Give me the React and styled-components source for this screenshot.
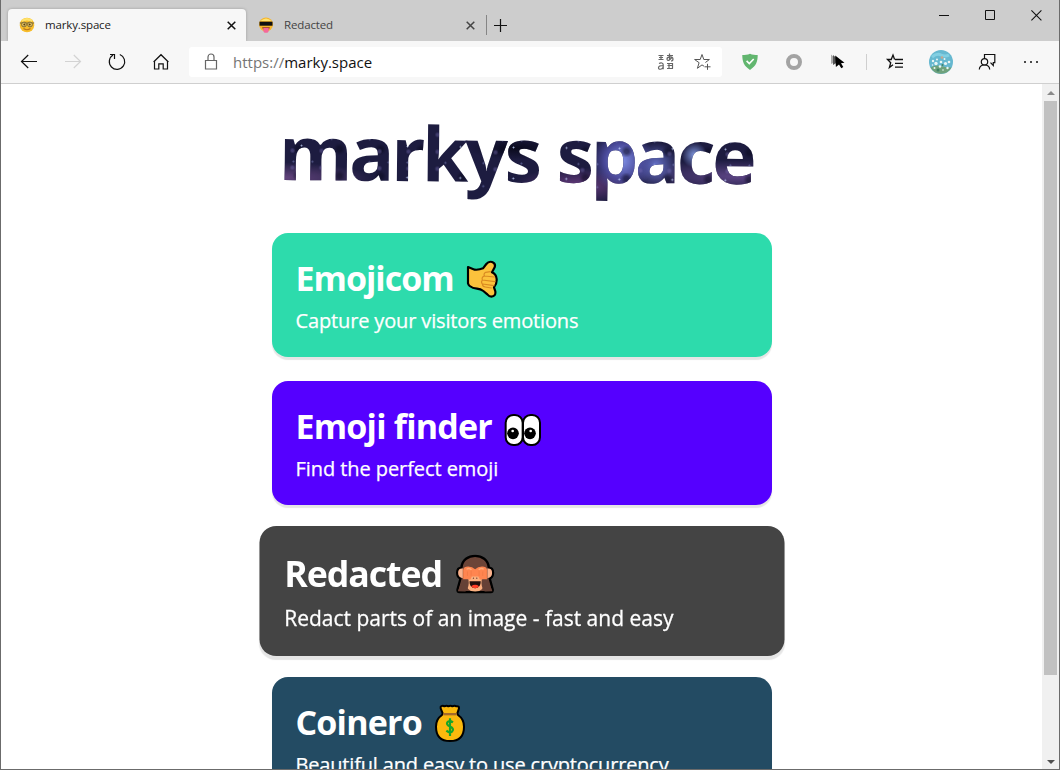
import React from "react";
import styled, { createGlobalStyle, css } from "styled-components";

const apps = [
  {
    name: "Emojicom",
    text: "Capture your visitors emotions",
    color: "#2ddbac",
    emoji: <CallMeHand />,
    spacing: "-1px",
    textSpacing: "-0.14px",
  },
  {
    name: "Emoji finder",
    text: "Find the perfect emoji",
    color: "#5500ff",
    emoji: <Eyes />,
    spacing: "-0.8px",
    textSpacing: "-0.07px",
  },
  {
    name: "Redacted",
    text: "Redact parts of an image - fast and easy",
    color: "#444444",
    emoji: <Monkey />,
    spacing: "-1px",
    textSpacing: "0px",
    hovered: true,
  },
  {
    name: "Coinero",
    text: "Beautiful and easy to use cryptocurrency",
    color: "#234b63",
    emoji: <MoneyBag />,
    spacing: "-0.8px",
    textSpacing: "-0.17px",
  },
];

const App = () => {
  return (
    <Window>
      <GlobalStyle />
      <TabStrip>
        <Tab $active>
          <NerdFace />
          <TabTitle>marky.space</TabTitle>
          <CloseIcon color="#111" />
        </Tab>
        <Tab>
          <CensoredFace />
          <TabTitle>Redacted</TabTitle>
          <CloseIcon color="#444" />
        </Tab>
        <NewTab>
          <Icon width="13" height="13" viewBox="0 0 13 13">
            <path d="M6.5 0v13M0 6.5h13" />
          </Icon>
        </NewTab>
        <WindowControls>
          <Icon width="11" height="11" viewBox="0 0 11 11" $weight={1}>
            <path d="M0 5.5h10" />
          </Icon>
          <Icon width="11" height="11" viewBox="0 0 11 11" $weight={1}>
            <path d="M.5 .5h9v9h-9z" />
          </Icon>
          <Icon width="11" height="11" viewBox="0 0 11 11" $weight={1.1}>
            <path d="M.4 .4l10 10M10.4 .4l-10 10" />
          </Icon>
        </WindowControls>
      </TabStrip>
      <Toolbar>
        <Slot>
          <Icon>
            <path d="M18 9.5H2.5M9.2 3l-6.700 6.500 6.700 6.500" />
          </Icon>
        </Slot>
        <Slot>
          <Icon $color="#d3d3d3">
            <path d="M2 9.5h15.500M10.800 3l6.700 6.500-6.700 6.500" />
          </Icon>
        </Slot>
        <Slot>
          <Icon>
            <path d="M12.8 2.5A7.7 7.7 0 1 1 6 3.1M3 2.5h4.5V7" />
          </Icon>
        </Slot>
        <Slot>
          <Icon>
            <path d="M3.5 9.2V17h4.3v-5.2h4.4V17h4.3V9.2M2.6 10L10 2.7l7.4 7.3" />
          </Icon>
        </Slot>
        <AddressBar>
          <Icon $color="#666">
            <path d="M4.5 8.5h11v8.5h-11zM7 8.5V5a3 3 0 0 1 6 0v3.5" />
          </Icon>
          <Url>
            <span>https://</span>marky.space
          </Url>
          <TranslateIcon />
          <Icon $color="#555" $weight={1}>
            <path d="M12 14.200L10 12.900l-4.600 3.400 1.700-5.600-4.500-3.200h5.600L10 2.500l1.800 5h5.600l-4 3M15.500 11.800v6M12.500 14.800h6" />
          </Icon>
        </AddressBar>
        <Extensions>
          <Icon $filled>
            <path
              fill="#62b66f"
              d="M10 1.800c2.600 1 5 1.300 7.700 1.300 0 6.500-1.500 11-7.700 14.800C3.800 14.100 2.300 9.600 2.300 3.100 5 3.100 7.400 2.800 10 1.800z"
            />
            <path fill="none" stroke="#fff" strokeWidth="1.6" d="M6.600 8.900l2.700 2.700 4.400-4.600" />
          </Icon>
          <Icon $filled>
            <circle cx="10" cy="10" r="6" fill="none" stroke="#a3a3a3" strokeWidth="4" />
          </Icon>
          <Icon $filled>
            <path fill="#aaa" d="M3 2.500l8 7-4 .5L3 12z" />
            <path fill="#555" d="M5 3l8 7-4 .5L5 13z" />
            <path fill="#000" d="M7.200 3.500l9.300 7.300-3.500.400 2.300 3.800-2 1.300-2.300-3.900-3.100 2.500z" />
          </Icon>
        </Extensions>
        <Divider />
        <BrowserActions>
          <Icon $weight={1.3}>
            <path d="M9.600 7.500L8 3 6.200 7.500H2.500l3.200 3.200-1.300 4.800L8 12.700M10 7.500h8M10 11.300h8M10 15.200h8" />
          </Icon>
          <Avatar />
          <Icon $weight={1.2}>
            <path d="M7.500 6.500v-4h10.300v8.200h-1.500v2.800l-2.800-2.800" />
            <circle cx="7.500" cy="9.800" r="3.200" />
            <path d="M2.300 17.500c.3-6 10.100-6 10.400 0" />
          </Icon>
          <Icon $filled>
            <circle cx="4" cy="10" r="1" />
            <circle cx="10" cy="10" r="1" />
            <circle cx="16" cy="10" r="1" />
          </Icon>
        </BrowserActions>
      </Toolbar>
      <Viewport>
        <Page>
          <Heading>markys space</Heading>
          {apps.map((app) => (
            <Card key={app.name} $color={app.color} $hovered={app.hovered}>
              <CardTitle $spacing={app.spacing}>
                <span>{app.name}</span>
                {app.emoji}
              </CardTitle>
              <CardText $spacing={app.textSpacing}>{app.text}</CardText>
            </Card>
          ))}
        </Page>
        <Scrollbar>
          <Arrow $color="#8a8a8a" $up />
          <Thumb />
          <Arrow $color="#505050" />
        </Scrollbar>
      </Viewport>
    </Window>
  );
};

export default App;

function CloseIcon({ color }) {
  return (
    <Icon width="9" height="9" viewBox="0 0 9 9" $weight={1.5} $color={color}>
      <path d="M.7 .7l7.600 7.600M8.300 .7L.7 8.300" />
    </Icon>
  );
}

function TranslateIcon() {
  return (
    <Icon $color="#666" $weight={1.2}>
      <path d="M2.500 3.500h5M3 5.500h4M2.500 7.500h5M5 3v5M11 3.500h6M13.500 1.500v7M16 4.500c-1 4-5 5-5 2.500s6-3 6 0c0 1.500-1 2-2 2M3 11.500c2-1 4.200-.7 4.200 1.300v4.500M7 13.500c-3 0-4.500.6-4.500 2.200 0 2.200 3.500 2 4.500-.2M11 11.500h5.500v5M11.500 13.500h5M11 16.500h6M13 11v5" />
    </Icon>
  );
}

function NerdFace() {
  return (
    <Favicon viewBox="0 0 16 16">
      <circle cx="8" cy="8" r="7.300" fill="#f7bd2c" />
      <path d="M3 4Q8 .5 13 4" fill="none" stroke="#ffe26b" strokeWidth="2.500" />
      <path d="M.8 6h14.400" stroke="#7d6a35" strokeWidth="1" />
      <circle cx="5" cy="7.500" r="2.400" fill="#e9c766" stroke="#7d6a35" strokeWidth="1" />
      <circle cx="11" cy="7.500" r="2.400" fill="#e9c766" stroke="#7d6a35" strokeWidth="1" />
      <circle cx="5.300" cy="7.500" r="1" fill="#584113" />
      <circle cx="10.700" cy="7.500" r="1" fill="#584113" />
      <path d="M4.500 11.500Q8 14 11.500 11.500" fill="none" stroke="#b8741c" strokeWidth="1.200" />
    </Favicon>
  );
}

function CensoredFace() {
  return (
    <Favicon viewBox="0 0 16 16">
      <circle cx="8" cy="7.500" r="7" fill="#f7b52c" />
      <path d="M2.500 4Q8-1 13.500 4z" fill="#ffe372" />
      <path d="M1.500 4.700h13v4h-13z" fill="#111" />
      <path d="M4 10.300h8q-1 3-4 3t-4-3z" fill="#963a28" />
      <path d="M5.300 11h5.400v2.200q0 2.600-2.700 2.600t-2.700-2.600z" fill="#f5699a" />
    </Favicon>
  );
}

function Avatar() {
  return (
    <svg width="24" height="24" viewBox="0 0 24 24">
      <circle cx="12" cy="12" r="12" fill="#66b8d0" />
      <path d="M1.500 17.500q5-3 10.500-1.500t10.500 1.500A12 12 0 0 1 1.500 17.500z" fill="#6fa27c" />
      <path d="M3 7q5-4 9-2t8 0" fill="none" stroke="#82cfe2" strokeWidth="3" />
      <g fill="#e8f6f5">
        <circle cx="4" cy="11" r="1.200" />
        <circle cx="8" cy="9.500" r="1" />
        <circle cx="7" cy="13.500" r="1.700" />
        <circle cx="12" cy="12" r="1.300" />
        <circle cx="15.500" cy="9" r="1" />
        <circle cx="16.500" cy="13.500" r="1.600" />
        <circle cx="20" cy="12" r="1.300" />
        <circle cx="11" cy="16.500" r="1.300" />
        <circle cx="5.500" cy="18" r="1" />
        <circle cx="18.500" cy="18" r="1.200" />
        <circle cx="14" cy="20" r=".8" />
        <circle cx="3.500" cy="15" r=".8" />
      </g>
      <circle cx="13" cy="7.500" r="1.300" fill="#c4a68f" />
      <circle cx="9" cy="20" r="1.500" fill="#3f8266" />
      <circle cx="13.500" cy="15" r="1" fill="#3f8266" />
    </svg>
  );
}

function CallMeHand() {
  return (
    <svg width="32" height="38" viewBox="621 105 96 114">
      <path
        d="M627 126l20 8q14 1 25-4l10-13q7-9 17-6 12 4 8 16l-8 15q13 6 14 20 1 15-8 25l4 12q2 15-12 16-6 0-12-7l-12-10q-8-6-19-7-13-1-22-8-4-3-5-8z"
        fill="#fcc23c"
        stroke="#000"
        strokeWidth="6.500"
        strokeLinejoin="round"
      />
      <path
        d="M694 140l-14 2q-8 5-3 11-10 2-7 12-5 6 0 12 1 9 9 9l18 3M677 153l29 3M670 165l38 5M671 177l34 5"
        fill="none"
        stroke="#d98a22"
        strokeWidth="3.500"
        strokeLinecap="round"
        strokeLinejoin="round"
      />
    </svg>
  );
}

function Eyes() {
  return (
    <LowEmoji width="38" height="34" viewBox="734 114 114 102">
      <g fill="#fff" stroke="#000" strokeWidth="6">
        <rect x="739" y="120" width="51" height="90" rx="23" />
        <rect x="791" y="120" width="51" height="90" rx="23" />
      </g>
      <circle cx="761" cy="175" r="17.500" />
      <circle cx="812" cy="175" r="17.500" />
      <circle cx="760" cy="168" r="4" fill="#fff" />
      <circle cx="814" cy="168" r="4" fill="#fff" />
    </LowEmoji>
  );
}

function Monkey() {
  return (
    <svg width="38.700" height="38" viewBox="617 104 122 120">
      <path
        d="M637 144C640 97 716 97 719 144q13 0 13 16 0 13-10 17l9 33q1 8-6 8h-94q-7 0-6-8l9-33q-10-4-10-17 0-16 13-16z"
        fill="#6c4437"
        stroke="#000"
        strokeWidth="7"
        strokeLinejoin="round"
      />
      <path d="M641 147q-14-1-14 13 0 15 14 16zM715 147q14-1 14 13 0 15-14 16z" fill="#fbb28c" />
      <path d="M653 188q5-21 25-21t25 21q4 28-25 28t-25-28z" fill="#fbb07f" />
      <path d="M642 151q2-10 15-10 13 0 21 8 8-8 21-8 13 0 15 10v29h-22l-4-9h-20l-4 9h-22z" fill="#ff8550" />
      <path
        d="M643 152v26M713 152v26M655 156v13M666 153v16M690 153v16M701 156v13"
        stroke="#e9733f"
        strokeWidth="1.500"
      />
      <path d="M652 149q9-5 15 2M689 151q6-7 15-2" fill="none" stroke="#ffab78" strokeWidth="4" />
      <path d="M640 180h18q4 22-9 36l-23-1zM716 180h-18q-4 22 9 36l23-1z" fill="#654136" />
      <circle cx="673" cy="176" r="2" fill="#60362a" />
      <circle cx="683" cy="176" r="2" fill="#60362a" />
      <path d="M661 185h34q0 21-17 21t-17-21z" fill="#210f0c" />
      <path d="M666 200q12-9 24 0-4 6-12 6t-12-6z" fill="#ff3e26" />
    </svg>
  );
}

function MoneyBag() {
  return (
    <svg width="32" height="39" viewBox="552 102 96 117">
      <path
        d="M573 109q6-3 10 0 7-3 12 0 7-3 12 0 7-3 12 0 9-1 8 6l-5 15 2 5q18 12 18 35 0 43-42 43t-42-43q0-23 18-35l2-5-6-15q-1-5 1-6z"
        fill="#fbb90d"
        stroke="#000"
        strokeWidth="6"
        strokeLinejoin="round"
      />
      <path d="M580 129h40v7h-40z" fill="#a56a2b" />
      <path
        d="M600 145v53M609 157q-8-6-15-2-6 5 0 11l11 6q7 6 1 13-7 5-17-3"
        fill="none"
        stroke="#16a529"
        strokeWidth="6.500"
      />
    </svg>
  );
}

function Icon({ width = 20, height = 20, viewBox = "0 0 20 20", ...rest }) {
  return <Svg width={width} height={height} viewBox={viewBox} {...rest} />;
}

const GlobalStyle = createGlobalStyle`
  body {
    margin: 0;
    overflow: hidden;
    font-family: "Open Sans", "Noto Sans", sans-serif;
  }
  * {
    box-sizing: border-box;
  }
`;

const Window = styled.div`
  display: flex;
  flex-direction: column;
  width: 1060px;
  height: 770px;
  overflow: hidden;
  border: 1px solid #6b6b6b;
  border-top: 0;
  background: #fff;
`;

const Svg = styled.svg`
  display: block;
  flex-shrink: 0;
  fill: ${(props) => (props.$filled ? "#111" : "none")};
  stroke: ${(props) => (props.$filled ? "none" : props.$color || "#111")};
  stroke-width: ${(props) => props.$weight || 1.2};
`;

const TabStrip = styled.div`
  display: flex;
  align-items: flex-end;
  height: 41px;
  padding-left: 7px;
  background: #cdcdcd;
  flex-shrink: 0;
`;

const Tab = styled.div`
  display: flex;
  align-items: center;
  width: ${(props) => (props.$active ? "238px" : "240px")};
  height: 32px;
  padding: ${(props) => (props.$active ? "0 10px 0 11px" : "0 11px 0 12px")};
  border-radius: 4px 4px 0 0;
  color: #444;
  ${(props) =>
    props.$active &&
    css`
      background: #f7f7f7;
      color: #222;
      box-shadow: 0 0 3px rgb(0 0 0 / 25%);
      clip-path: inset(-4px -4px 0 -4px);
    `}
`;

const Favicon = styled.svg`
  width: 16px;
  height: 16px;
  margin-right: 10px;
`;

const TabTitle = styled.span`
  flex: 1;
  font-size: 11.5px;
  line-height: 16px;
  letter-spacing: -0.15px;
`;

const NewTab = styled.div`
  display: flex;
  align-items: center;
  height: 20px;
  margin-bottom: 6px;
  padding-left: 7px;
  border-left: 1px solid #858585;
`;

const WindowControls = styled.div`
  display: flex;
  align-self: flex-start;
  gap: 35px;
  margin-left: auto;
  padding: 10px 17px 0 0;
`;

const Toolbar = styled.div`
  display: flex;
  align-items: center;
  height: 43px;
  padding-left: 6px;
  background: #f7f7f7;
  border-bottom: 1px solid #cfcfcf;
  flex-shrink: 0;
`;

const Slot = styled.div`
  display: flex;
  justify-content: center;
  width: 44px;
`;

const AddressBar = styled.div`
  display: flex;
  align-items: center;
  width: 533px;
  height: 30px;
  margin-left: 6px;
  padding: 0 10px 0 12px;
  background: #fff;
  border-radius: 3px;

  svg:last-child {
    margin-left: 16px;
  }
`;

const Url = styled.span`
  flex: 1;
  margin-left: 12px;
  font-size: 15px;
  line-height: 20px;
  color: #111;

  span {
    color: #757575;
  }
`;

const Extensions = styled.div`
  display: flex;
  gap: 24px;
  margin-left: 18px;
`;

const Divider = styled.div`
  width: 1px;
  height: 16px;
  margin: 0 18px;
  background: #cfcfcf;
`;

const BrowserActions = styled.div`
  display: flex;
  align-items: center;
  gap: 24px;
`;

const Viewport = styled.div`
  display: flex;
  flex: 1;
  min-height: 0;
`;

const Page = styled.div`
  display: flex;
  flex-direction: column;
  align-items: center;
  gap: 24px;
  flex: 1;
  padding-left: 1px;
  overflow: hidden;
`;

// night sky clipped to the letters
const Heading = styled.h1`
  flex-shrink: 0;
  height: 105px;
  margin: 17px 12px 3px 0;
  padding: 0 4px;
  font-size: 75px;
  font-weight: 700;
  line-height: 105px;
  letter-spacing: -3.3px;
  word-spacing: 2px;
  white-space: nowrap;
  color: transparent;
  transform: rotate(0.5deg);
  background:
    radial-gradient(circle, rgb(200 215 255 / 80%) 0.5px, transparent 1.4px) 0 0 / 53px 31px,
    radial-gradient(circle, rgb(150 160 225 / 45%) 0.5px, transparent 1.5px) 9px 5px / 19px 23px,
    radial-gradient(circle, rgb(120 110 180 / 40%) 1px, transparent 3px) 3px 9px / 29px 17px,
    radial-gradient(circle, rgb(8 8 28 / 50%) 2px, transparent 6px) 3px 9px / 41px 27px,
    radial-gradient(circle at 72% 56%, #8090e6 0, rgb(85 85 175 / 80%) 5%, transparent 9%),
    radial-gradient(circle at 79% 60%, #6672ca 0, transparent 6%),
    radial-gradient(circle at 87% 50%, #8098e0 0, transparent 3%),
    radial-gradient(ellipse at 1% 75%, #65457e 0, transparent 14%),
    radial-gradient(ellipse at 63% 80%, #653b7c 0, transparent 15%),
    radial-gradient(ellipse at 96% 70%, #5d4585 0, transparent 16%),
    radial-gradient(ellipse at 50% 45%, #0a0a1c 0, transparent 14%),
    #1d1c40;
  background-clip: text;
  -webkit-background-clip: text;
`;

const Card = styled.div`
  flex-shrink: 0;
  width: 500px;
  height: 124px;
  padding: 23px 23.5px;
  border-radius: 16px;
  background-color: ${(props) => props.$color};
  box-shadow: 0 3px 1px rgb(0 0 0 / 10%);
  color: #fff;
  transform: ${(props) => (props.$hovered ? "scale(1.05)" : "none")};
`;

const CardTitle = styled.h2`
  display: flex;
  align-items: center;
  gap: 12.5px;
  height: 44px;
  margin: 0;
  font-size: 34px;
  line-height: 44px;
  letter-spacing: ${(props) => props.$spacing};
  white-space: nowrap;

  svg {
    margin-top: 2px;
  }
`;

const LowEmoji = styled.svg`
  && {
    margin-top: 7px;
  }
`;

const CardText = styled.p`
  margin: 7px 0 0;
  font-size: 20px;
  line-height: 28px;
  letter-spacing: ${(props) => props.$spacing};
  white-space: nowrap;
  -webkit-text-stroke: 0.25px currentColor;
`;

const Scrollbar = styled.div`
  display: flex;
  flex-direction: column;
  align-items: center;
  width: 17px;
  padding: 7px 0 5px;
  background: #f0f0f0;
`;

const Arrow = styled.div`
  border: 4px solid transparent;
  border-top-width: ${(props) => (props.$up ? 0 : "4px")};
  border-bottom-width: ${(props) => (props.$up ? "4px" : 0)};
  ${(props) => (props.$up ? "border-bottom-color" : "border-top-color")}: ${(props) => props.$color};
`;

const Thumb = styled.div`
  width: 13px;
  height: 574px;
  margin: 6px 0 auto;
  background: #c1c1c1;
`;
